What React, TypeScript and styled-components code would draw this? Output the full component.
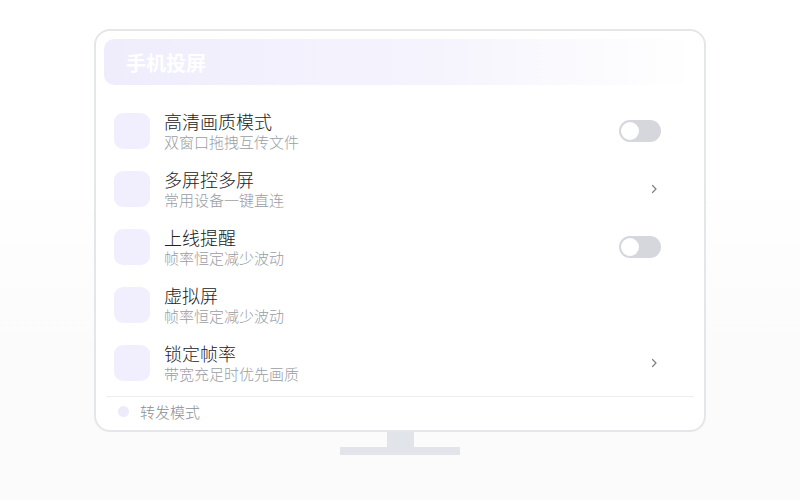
import { FC } from "react";
import styled, { createGlobalStyle } from "styled-components";

const GlobalStyle = createGlobalStyle`
  html, body {
    margin: 0;
    padding: 0;
  }
  body {
    font-family: "Noto Sans CJK SC", "Noto Sans", sans-serif;
    background: #ffffff;
  }
`;

interface IRow {
  title: string;
  desc: string;
  action: "toggle" | "arrow" | "none";
}

const rows: IRow[] = [
  { title: "高清画质模式", desc: "双窗口拖拽互传文件", action: "toggle" },
  { title: "多屏控多屏", desc: "常用设备一键直连", action: "arrow" },
  { title: "上线提醒", desc: "帧率恒定减少波动", action: "toggle" },
  { title: "虚拟屏", desc: "帧率恒定减少波动", action: "none" },
  { title: "锁定帧率", desc: "带宽充足时优先画质", action: "arrow" },
];

const Toggle: FC = () => (
  <Track>
    <Knob />
  </Track>
);

const Chevron: FC = () => (
  <ArrowBox>
    <svg width="6" height="10" viewBox="0 0 6 10" fill="none">
      <path
        d="M1.5 1.5 L5 5 L1.5 8.5"
        stroke="#7b7f87"
        strokeWidth="1.2"
        strokeLinecap="round"
        strokeLinejoin="round"
      />
    </svg>
  </ArrowBox>
);

const App: FC = () => {
  return (
    <Page>
      <GlobalStyle />
      <Monitor>
        <Header>
          <HeaderTitle>手机投屏</HeaderTitle>
        </Header>
        <List>
          {rows.map((row) => (
            <Row key={row.title}>
              <IconBox />
              <TextWrapper>
                <Title>{row.title}</Title>
                <Desc>{row.desc}</Desc>
              </TextWrapper>
              <Action>
                {row.action === "toggle" && <Toggle />}
                {row.action === "arrow" && <Chevron />}
              </Action>
            </Row>
          ))}
        </List>
        <Footer>
          <Dot />
          <FooterText>转发模式</FooterText>
        </Footer>
      </Monitor>
      <Neck />
      <Base />
    </Page>
  );
};

export default App;

const Page = styled.div`
  width: 800px;
  height: 500px;
  display: flex;
  flex-direction: column;
  align-items: center;
  padding-top: 29px;
  box-sizing: border-box;
  background: linear-gradient(180deg, #ffffff 0%, #ffffff 35%, #fbfbfc 70%, #fbfbfc 100%);
`;

const Monitor = styled.div`
  width: 612px;
  height: 403px;
  box-sizing: border-box;
  border: 2px solid #e4e6ea;
  border-radius: 16px;
  background: #ffffff;
  padding: 8px 8px 4px;
  display: flex;
  flex-direction: column;
`;

const Header = styled.div`
  height: 46px;
  border-radius: 10px;
  background: linear-gradient(90deg, #efedfc 0%, #f5f4fd 55%, #ffffff 100%);
  display: flex;
  align-items: center;
  padding-left: 22px;
  flex-shrink: 0;
`;

const HeaderTitle = styled.span`
  color: #ffffff;
  font-size: 20px;
  font-weight: 700;
`;

const List = styled.div`
  margin-top: 17px;
  display: flex;
  flex-direction: column;
`;

const Row = styled.div`
  height: 58px;
  display: flex;
  align-items: center;
  padding: 0 35px 0 10px;
`;

const IconBox = styled.div`
  width: 36px;
  height: 36px;
  border-radius: 9px;
  background: #f1effd;
  flex-shrink: 0;
`;

const TextWrapper = styled.div`
  margin-left: 14px;
  display: flex;
  flex-direction: column;
  flex: 1;
`;

const Title = styled.span`
  font-size: 18px;
  font-weight: 300;
  line-height: 22px;
  color: #222222;
`;

const Desc = styled.span`
  font-size: 15px;
  font-weight: 300;
  line-height: 20px;
  color: #9a9da4;
`;

const Action = styled.div`
  display: flex;
  align-items: center;
  justify-content: flex-end;
`;

const Track = styled.div`
  width: 42px;
  height: 22px;
  border-radius: 11px;
  background: #d5d7dd;
  position: relative;
  margin-top: -1px;
`;

const Knob = styled.div`
  position: absolute;
  left: 2px;
  top: 2px;
  width: 18px;
  height: 18px;
  border-radius: 50%;
  background: #ffffff;
`;

const ArrowBox = styled.div`
  width: 20px;
  height: 20px;
  display: flex;
  align-items: center;
  justify-content: center;
  margin-right: -3px;
`;

const Footer = styled.div`
  margin: 4px 2px 0;
  border-top: 1px solid #eceef1;
  flex: 1;
  display: flex;
  align-items: center;
  padding-left: 12px;
`;

const Dot = styled.div`
  width: 11px;
  height: 11px;
  border-radius: 50%;
  background: #ecebfb;
`;

const FooterText = styled.span`
  margin-left: 11px;
  font-size: 15px;
  font-weight: 300;
  color: #8c8f96;
`;

const Neck = styled.div`
  width: 27px;
  height: 15px;
  background: #e1e4e8;
`;

const Base = styled.div`
  width: 120px;
  height: 8px;
  background: #e1e4e8;
`;
